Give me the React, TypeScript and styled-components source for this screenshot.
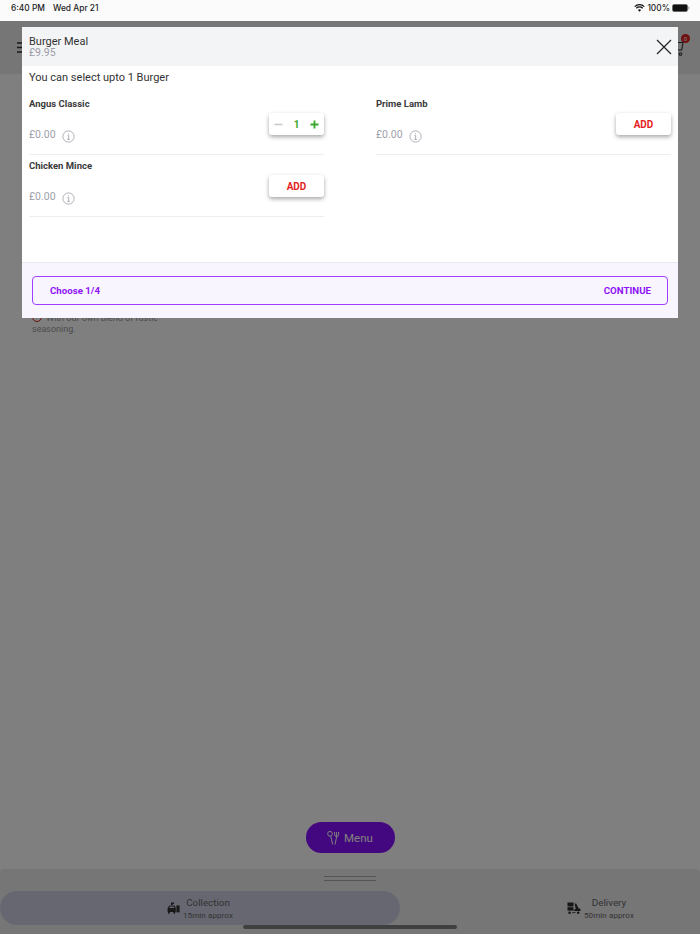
import React from 'react'
import styled, { createGlobalStyle } from 'styled-components'

const GlobalStyle = createGlobalStyle`
  html, body {
    margin: 0;
    padding: 0;
    height: 100%;
    font-family: Roboto, 'Liberation Sans', sans-serif;
  }
  #root {
    height: 100%;
  }
`

const Screen = styled.div`
  display: flex;
  flex-direction: column;
  width: 700px;
  height: 934px;
  overflow: hidden;
  background: #fff;
`

const StatusBar = styled.div`
  display: flex;
  align-items: center;
  justify-content: space-between;
  flex: none;
  box-sizing: border-box;
  height: 21px;
  padding: 0 10px 5px 11px;
  background: #fbfbfb;
  font-family: Inter, 'Liberation Sans', sans-serif;
  font-size: 8.4px;
  font-weight: 500;
  color: #222;
`

const StatusGroup = styled.div`
  display: flex;
  align-items: center;
  gap: ${(props: { $gap: number }) => props.$gap}px;
`

const Stage = styled.div`
  position: relative;
  flex: 1;
  display: flex;
  flex-direction: column;
  min-height: 0;
`

const TopBar = styled.div`
  display: flex;
  align-items: center;
  justify-content: space-between;
  flex: none;
  box-sizing: border-box;
  height: 53px;
  padding: 0 14px 0 17px;
  background: #ececec;
`

const CartWrap = styled.div`
  position: relative;
  width: 16px;
  height: 18px;
`

const CartBadge = styled.span`
  position: absolute;
  top: -5px;
  right: -4px;
  width: 9px;
  height: 9px;
  line-height: 9px;
  border-radius: 50%;
  background: #e02020;
  color: #fff;
  font-size: 6px;
  text-align: center;
`

const Main = styled.div`
  flex: 1;
  display: flex;
  flex-direction: column;
  align-items: flex-start;
  min-height: 0;
`

const Note = styled.div`
  box-sizing: border-box;
  width: 140px;
  margin: 238px 0 0 32px;
  font-size: 9px;
  line-height: 11px;
  color: #999;
`

const MenuButton = styled.div`
  display: flex;
  align-items: center;
  justify-content: center;
  gap: 4px;
  align-self: center;
  margin: auto 0 16px;
  width: 89px;
  height: 31px;
  border-radius: 16px;
  background: #8610fe;
  box-shadow: 0 0 0 8px rgba(255, 255, 255, 0.08);
  color: #fff;
  font-size: 11.5px;
`

const BottomPanel = styled.div`
  position: relative;
  flex: none;
  box-sizing: border-box;
  height: 65px;
  padding-top: 7px;
  background: #ededef;
  border-radius: 4px 4px 0 0;
`

const Handle = styled.div`
  box-sizing: border-box;
  width: 52px;
  height: 5px;
  margin: 0 auto 10px;
  border-top: 1px solid #a8a8a8;
  border-bottom: 1px solid #a8a8a8;
`

const TabRow = styled.div`
  display: flex;
  height: 34px;
`

const Tab = styled.div<{ $active?: boolean }>`
  display: flex;
  align-items: center;
  justify-content: ${props => (props.$active ? 'center' : 'flex-end')};
  gap: 3px;
  box-sizing: border-box;
  width: ${props => (props.$active ? '400px' : '300px')};
  padding: ${props => (props.$active ? '0' : '0 66px 0 0')};
  border-radius: 17px;
  background: ${props => (props.$active ? '#cdcfe2' : 'transparent')};
`

const TabText = styled.div`
  display: flex;
  flex-direction: column;
  align-items: center;
  gap: 2px;
  color: #666;
`

const TabTitle = styled.span`
  font-size: 9.8px;
  line-height: 13px;
`

const TabSub = styled.span`
  font-size: 8px;
  line-height: 10px;
  letter-spacing: 0.1px;
`

const HomeIndicator = styled.div`
  position: absolute;
  left: 243px;
  bottom: 5px;
  width: 214px;
  height: 4px;
  border-radius: 2px;
  background: #808080;
`

const Overlay = styled.div`
  position: absolute;
  inset: 0;
  box-sizing: border-box;
  padding: 6px 22px 0;
  background: rgba(0, 0, 0, 0.5);
`

const Modal = styled.div`
  display: flex;
  flex-direction: column;
  width: 656px;
  height: 291px;
  background: #fff;
`

const ModalHeader = styled.div`
  display: flex;
  align-items: center;
  justify-content: space-between;
  flex: none;
  box-sizing: border-box;
  height: 39px;
  padding: 0 6px 0 7px;
  background: #f3f4f6;
`

const HeaderTitle = styled.div`
  font-size: 11px;
  line-height: 12px;
  color: #333;
`

const HeaderPrice = styled.div`
  font-size: 10.5px;
  line-height: 10px;
  color: #9d9da8;
`

const CloseButton = styled.div`
  display: flex;
`

const ModalBody = styled.div`
  flex: 1;
  padding: 5px 7px 0;
`

const Prompt = styled.div`
  font-size: 11px;
  line-height: 14px;
  color: #333;
  margin-bottom: 13px;
`

const Options = styled.div`
  display: grid;
  grid-template-columns: 295px 295px;
  column-gap: 52px;
  grid-auto-rows: 62px;
`

const OptionRow = styled.div`
  display: flex;
  align-items: flex-start;
  justify-content: space-between;
  box-sizing: border-box;
  height: 57px;
  border-bottom: 1px solid #eeeeee;
`

const OptionInfo = styled.div`
  display: flex;
  flex-direction: column;
`

const OptionName = styled.div`
  font-size: 9.5px;
  line-height: 12px;
  font-weight: 700;
  color: #3a3a3a;
`

const PriceRow = styled.div`
  display: flex;
  align-items: center;
  gap: 6px;
  margin-top: 17px;
  font-size: 10.5px;
  line-height: 14px;
  color: #a0a0aa;
`

const InfoGlyph = styled.span`
  display: flex;
  margin-top: 3px;
`

const ActionButton = styled.div`
  display: flex;
  align-items: center;
  justify-content: center;
  box-sizing: border-box;
  width: 55px;
  height: 22px;
  margin-top: 15px;
  border-radius: 3px;
  background: #fff;
  box-shadow: 0 2px 4px rgba(0, 0, 0, 0.35);
  color: #e41e1e;
  font-size: 10px;
  font-weight: 700;
`

const Stepper = styled(ActionButton)`
  justify-content: space-between;
  padding: 0 5px;
  color: #3aa62e;
`

const StepGlyph = styled.span<{ $muted?: boolean }>`
  display: flex;
  color: ${props => (props.$muted ? '#c8c8c8' : '#3aa62e')};
`

const ModalFooter = styled.div`
  flex: none;
  box-sizing: border-box;
  height: 56px;
  padding: 13px 10px 0;
  border-top: 1px solid #e8e6ee;
  background: #f8f5fe;
`

const ContinueBar = styled.div`
  display: flex;
  align-items: center;
  justify-content: space-between;
  box-sizing: border-box;
  height: 29px;
  padding: 0 16px 0 17px;
  border: 1px solid #a040ff;
  border-radius: 4px;
  color: #8f12f8;
  font-size: 9.7px;
  font-weight: 700;
`

const InfoIcon = () => (
  <svg width="13" height="13" viewBox="0 0 13 13" fill="none" stroke="#a5a5b0" strokeWidth="0.9">
    <circle cx="6.5" cy="6.5" r="5.6" />
    <path d="M5.4 5.7h1.3v3.6M5.2 9.4h2.7M6.5 3.4v1" />
  </svg>
)

const WifiIcon = () => (
  <svg width="11" height="8" viewBox="0 0 11 8" fill="none" stroke="#111" strokeWidth="1.3">
    <path d="M0.7 2.6a7 7 0 0 1 9.6 0M2.3 4.3a4.6 4.6 0 0 1 6.4 0" />
    <path d="M5.5 7.8L3.9 6a2.3 2.3 0 0 1 3.2 0z" fill="#111" stroke="none" />
  </svg>
)

const BatteryIcon = () => (
  <svg width="18" height="8" viewBox="0 0 18 8">
    <rect x="0.3" y="0.3" width="15.4" height="7.4" rx="2" fill="#111" stroke="#999" strokeWidth="0.5" />
    <rect x="16.2" y="2.6" width="1.2" height="2.8" rx="0.6" fill="#aaa" />
  </svg>
)

const HamburgerIcon = () => (
  <svg width="14" height="11" viewBox="0 0 14 11" stroke="#333" strokeWidth="1.6">
    <path d="M0 1h14M0 5.5h14M0 10h14" />
  </svg>
)

const CartIcon = () => (
  <svg width="16" height="18" viewBox="0 0 16 18" fill="none" stroke="#333" strokeWidth="1.1">
    <path d="M15.5 1h-2l-1.8 10H3M13.2 3.5H5" />
    <circle cx="4.5" cy="15" r="1.3" />
    <circle cx="10.5" cy="15" r="1.3" />
  </svg>
)

const CloseIcon = () => (
  <svg width="16" height="16" viewBox="0 0 16 16" stroke="#222" strokeWidth="1.2">
    <path d="M1 1l14 14M15 1L1 15" />
  </svg>
)

const MenuIcon = () => (
  <svg width="13" height="14" viewBox="0 0 13 14" fill="none" stroke="#fff" strokeWidth="1">
    <ellipse cx="3" cy="2.8" rx="2.3" ry="2.4" />
    <path d="M3.8 5.1L5.6 13.5M8 13.5L9.6 6M7.6 1v2.6a2 2 0 0 0 4 0V1M9.6 1v5" />
  </svg>
)

const CarIcon = () => (
  <svg width="13" height="12" viewBox="0 0 13 12" fill="#333">
    <path d="M4 0.5h3v1.4H5.6V3H4z" />
    <path d="M2.4 3.4h5L8.8 6v4H0.6V6zM3 4.4L2.2 6h5L6.6 4.4z" fillRule="evenodd" />
    <rect x="9.4" y="3.4" width="3.2" height="7" />
    <rect x="1" y="10" width="1.8" height="1.6" />
    <rect x="6.4" y="10" width="1.8" height="1.6" />
  </svg>
)

const ScooterIcon = () => (
  <svg width="14" height="13" viewBox="0 0 14 13" fill="#2c2c2c">
    <rect x="0.5" y="0.5" width="6" height="4" />
    <rect x="0.5" y="5.2" width="6" height="3.4" />
    <path d="M7.6 1.5h1.6l2 4.2 2.3 1.6v1.7H6.8v-1l1.9-1z" />
    <circle cx="2.6" cy="10.7" r="1.3" />
    <circle cx="11.2" cy="10.7" r="1.3" />
    <rect x="5" y="10.3" width="3.6" height="0.8" />
  </svg>
)

const NoteMarker = styled.span`
  display: inline-block;
  box-sizing: border-box;
  width: 10px;
  height: 10px;
  margin-right: 4px;
  vertical-align: -1px;
  border: 1px solid #e02020;
  border-radius: 50%;
`

type OptionProps = {
  name: string
  quantity?: number
}

const Option: React.FC<OptionProps> = ({ name, quantity }) => (
  <OptionRow>
    <OptionInfo>
      <OptionName>{name}</OptionName>
      <PriceRow>
        £0.00
        <InfoGlyph>
          <InfoIcon />
        </InfoGlyph>
      </PriceRow>
    </OptionInfo>
    {quantity ? (
      <Stepper>
        <StepGlyph $muted>
          <svg width="9" height="9" viewBox="0 0 9 9" stroke="currentColor" strokeWidth="1.6">
            <path d="M0.5 4.5h8" />
          </svg>
        </StepGlyph>
        {quantity}
        <StepGlyph>
          <svg width="9" height="9" viewBox="0 0 9 9" stroke="currentColor" strokeWidth="1.8">
            <path d="M0.5 4.5h8M4.5 0.5v8" />
          </svg>
        </StepGlyph>
      </Stepper>
    ) : (
      <ActionButton>ADD</ActionButton>
    )}
  </OptionRow>
)

export default function App() {
  return (
    <Screen>
      <GlobalStyle />
      <StatusBar>
        <StatusGroup $gap={8}>
          <span>6:40 PM</span>
          <span>Wed Apr 21</span>
        </StatusGroup>
        <StatusGroup $gap={2}>
          <WifiIcon />
          <span>100%</span>
          <BatteryIcon />
        </StatusGroup>
      </StatusBar>
      <Stage>
        <TopBar>
          <HamburgerIcon />
          <CartWrap>
            <CartIcon />
            <CartBadge>0</CartBadge>
          </CartWrap>
        </TopBar>
        <Main>
          <Note>
            <NoteMarker />
            With our own blend of rustic seasoning.
          </Note>
          <MenuButton>
            <MenuIcon />
            Menu
          </MenuButton>
        </Main>
        <BottomPanel>
          <Handle />
          <TabRow>
            <Tab $active>
              <CarIcon />
              <TabText>
                <TabTitle>Collection</TabTitle>
                <TabSub>15min approx</TabSub>
              </TabText>
            </Tab>
            <Tab>
              <ScooterIcon />
              <TabText>
                <TabTitle>Delivery</TabTitle>
                <TabSub>50min approx</TabSub>
              </TabText>
            </Tab>
          </TabRow>
          <HomeIndicator />
        </BottomPanel>
        <Overlay>
          <Modal>
            <ModalHeader>
              <div>
                <HeaderTitle>Burger Meal</HeaderTitle>
                <HeaderPrice>£9.95</HeaderPrice>
              </div>
              <CloseButton>
                <CloseIcon />
              </CloseButton>
            </ModalHeader>
            <ModalBody>
              <Prompt>You can select upto 1 Burger</Prompt>
              <Options>
                <Option name="Angus Classic" quantity={1} />
                <Option name="Prime Lamb" />
                <Option name="Chicken Mince" />
              </Options>
            </ModalBody>
            <ModalFooter>
              <ContinueBar>
                <span>Choose 1/4</span>
                <span>CONTINUE</span>
              </ContinueBar>
            </ModalFooter>
          </Modal>
        </Overlay>
      </Stage>
    </Screen>
  )
}
